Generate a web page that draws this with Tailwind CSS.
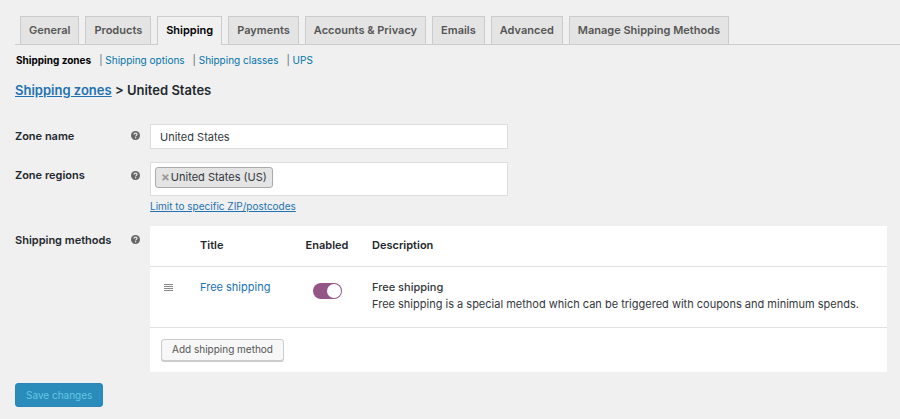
<!DOCTYPE html>
<html lang="en">
<head>
    <meta charset="UTF-8">
    <meta name="viewport" content="width=device-width, initial-scale=1.0">
    <script src="https://cdn.jsdelivr.net/npm/@tailwindcss/browser@4"></script>
    <title>Shipping zones</title>
</head>
<body class="bg-[#f0f0f0] font-['Inter','Liberation_Sans',sans-serif] text-[11px] text-[#32373c]">
    <!-- Settings tabs -->
    <nav class="ml-[15px] flex gap-[6px] border-b border-[#ccc] pt-4 pl-[5px] leading-[19px] font-semibold text-[#555]">
        <a href="#" class="border border-b-0 border-[#ccc] bg-[#e4e4e4] px-2 py-1">General</a>
        <a href="#" class="border border-b-0 border-[#ccc] bg-[#e4e4e4] px-2 py-1">Products</a>
        <a href="#" class="-mb-px border border-b-0 border-[#ccc] bg-[#f0f0f0] px-2 py-1 text-black">Shipping</a>
        <a href="#" class="border border-b-0 border-[#ccc] bg-[#e4e4e4] px-2 py-1">Payments</a>
        <a href="#" class="border border-b-0 border-[#ccc] bg-[#e4e4e4] px-2 py-1">Accounts &amp; Privacy</a>
        <a href="#" class="border border-b-0 border-[#ccc] bg-[#e4e4e4] px-2 py-1">Emails</a>
        <a href="#" class="border border-b-0 border-[#ccc] bg-[#e4e4e4] px-2 py-1">Advanced</a>
        <a href="#" class="border border-b-0 border-[#ccc] bg-[#e4e4e4] px-2 py-1">Manage Shipping Methods</a>
    </nav>

    <main class="pr-[13px] pb-3 pl-[15px]">
        <!-- Section links -->
        <ul class="flex gap-2 pt-[7px] pl-px text-[10px] leading-4 text-[#0073aa]">
            <li><a href="#" class="font-bold text-black">Shipping zones</a></li>
            <li><span class="text-[#666]">|</span> <a href="#">Shipping options</a></li>
            <li><span class="text-[#666]">|</span> <a href="#">Shipping classes</a></li>
            <li><span class="text-[#666]">|</span> <a href="#">UPS</a></li>
        </ul>

        <h2 class="mt-3 text-[13px] leading-5 font-semibold text-[#23282d]">
            <a href="#" class="text-[#2271b1] underline">Shipping zones</a> &gt; United States
        </h2>

        <form class="mt-6">
            <div class="grid grid-cols-[116px_19px_minmax(0,1fr)] items-start">
                <!-- Zone name -->
                <label for="zone-name" class="pt-1 leading-4 font-semibold text-[#23282d]">Zone name</label>
                <svg class="mt-[7px] size-[9px]" viewBox="0 0 18 18" aria-hidden="true">
                    <circle cx="9" cy="9" r="9" fill="#666" />
                    <path d="M6 7.2C6 5.2 7.3 4.2 9.1 4.2s3 1 3 2.6c0 2-2.7 2-2.7 4" fill="none" stroke="#f0f0f0" stroke-width="2.2" />
                    <circle cx="9.3" cy="13.6" r="1.4" fill="#f0f0f0" />
                </svg>
                <input id="zone-name" type="text" value="United States" class="h-[25px] w-full max-w-[358px] border border-[#ddd] bg-white px-[9px]">

                <!-- Zone regions -->
                <label for="zone-regions" class="mt-[14px] pt-1 leading-4 font-semibold text-[#23282d]">Zone regions</label>
                <svg class="mt-[22px] size-[9px]" viewBox="0 0 18 18" aria-hidden="true">
                    <circle cx="9" cy="9" r="9" fill="#666" />
                    <path d="M6 7.2C6 5.2 7.3 4.2 9.1 4.2s3 1 3 2.6c0 2-2.7 2-2.7 4" fill="none" stroke="#f0f0f0" stroke-width="2.2" />
                    <circle cx="9.3" cy="13.6" r="1.4" fill="#f0f0f0" />
                </svg>
                <div class="mt-[13px]">
                    <div class="flex h-[34px] w-full max-w-[358px] items-start border border-[#ddd] bg-white p-1">
                        <span class="flex h-[21px] items-center gap-px rounded-[3px] border border-[#aaa] bg-[#e4e4e4] px-[5px] pb-px">
                            <button type="button" aria-label="Remove United States (US)" class="text-[13px] leading-4 font-bold text-[#999]">×</button>United States (US)
                        </span>
                        <input id="zone-regions" type="text" class="h-5 min-w-0 flex-1 px-1 outline-none">
                    </div>
                    <a href="#" class="mt-[2px] block text-[10px] leading-4 text-[#2271b1] underline">Limit to specific ZIP/postcodes</a>
                </div>

                <!-- Shipping methods -->
                <div class="mt-[14px] pt-1 leading-4 font-semibold text-[#23282d]">Shipping methods</div>
                <svg class="mt-[21px] size-[9px]" viewBox="0 0 18 18" aria-hidden="true">
                    <circle cx="9" cy="9" r="9" fill="#666" />
                    <path d="M6 7.2C6 5.2 7.3 4.2 9.1 4.2s3 1 3 2.6c0 2-2.7 2-2.7 4" fill="none" stroke="#f0f0f0" stroke-width="2.2" />
                    <circle cx="9.3" cy="13.6" r="1.4" fill="#f0f0f0" />
                </svg>
                <table class="mt-3 w-full bg-white text-left leading-[17px]">
                    <thead class="border-b border-[#e1e1e1] text-[#23282d]">
                        <tr>
                            <th class="h-10 w-9"></th>
                            <th class="w-[106px] pl-[14px] font-semibold">Title</th>
                            <th class="w-[70px] text-center font-semibold">Enabled</th>
                            <th class="pl-[10px] font-semibold">Description</th>
                        </tr>
                    </thead>
                    <tbody>
                        <tr class="align-top">
                            <td class="h-[61px] pt-[17px]">
                                <svg class="ml-[14px] h-[7px] w-[9px]" viewBox="0 0 9 7" fill="#888" aria-hidden="true">
                                    <path d="M0 0h9v1H0zM0 2h9v1H0zM0 4h9v1H0zM0 6h9v1H0z" />
                                </svg>
                            </td>
                            <td class="pt-3 pl-[14px]"><a href="#" class="text-[#2271b1]">Free shipping</a></td>
                            <td class="pt-4">
                                <button type="button" role="switch" aria-checked="true" aria-label="Enabled" class="mx-auto flex h-4 w-[29px] justify-end rounded-full bg-[#935687] p-px">
                                    <span class="size-[14px] rounded-full bg-white"></span>
                                </button>
                            </td>
                            <td class="pt-3 pl-[10px]">
                                <strong class="block font-medium">Free shipping</strong>
                                <p>Free shipping is a special method which can be triggered with coupons and minimum spends.</p>
                            </td>
                        </tr>
                    </tbody>
                    <tfoot class="border-t border-[#e1e1e1]">
                        <tr>
                            <td colspan="4" class="h-[45px] pl-[11px]">
                                <button type="button" class="h-[22px] rounded-[3px] border border-[#ccc] bg-[#f7f7f7] px-[10px] text-[10px] text-[#555] shadow-[0_1px_0_#ccc]">Add shipping method</button>
                            </td>
                        </tr>
                    </tfoot>
                </table>
            </div>

            <button type="submit" class="mt-[11px] h-6 rounded-[3px] border border-[#2a85b8] bg-[#298cba] px-[10px] text-[10px] text-[#66c6e4]">Save changes</button>
        </form>
    </main>
</body>
</html>
